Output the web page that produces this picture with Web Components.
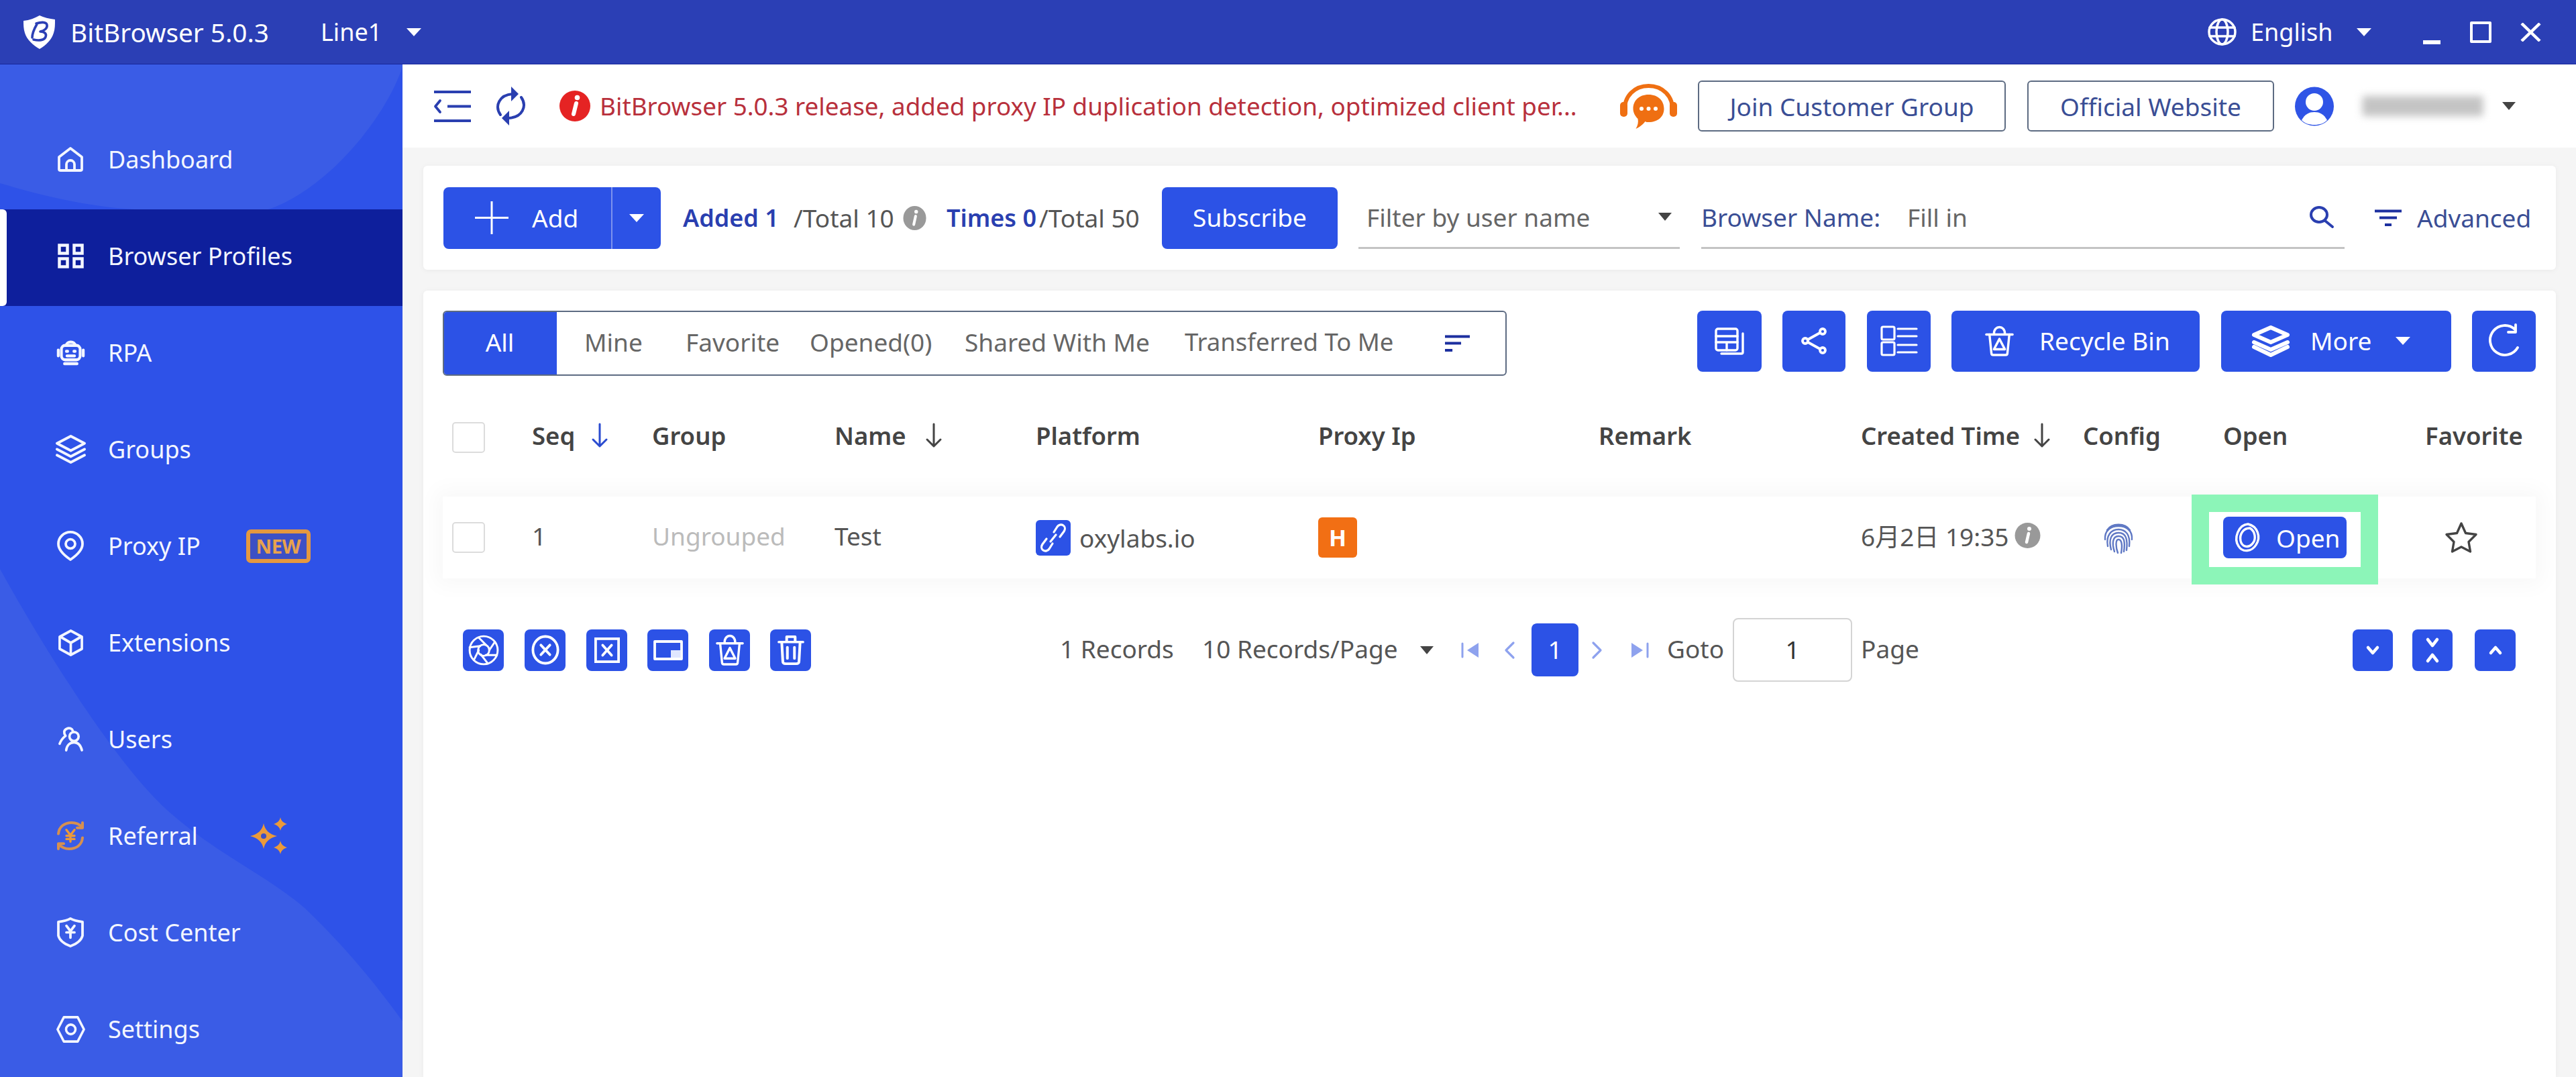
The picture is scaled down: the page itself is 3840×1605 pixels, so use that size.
<!DOCTYPE html>
<html lang="en">
<head>
<meta charset="utf-8">
<title>BitBrowser 5.0.3</title>
<style>
  html, body { margin: 0; width: 3840px; height: 1605px; overflow: hidden; background: #f5f5f5; }
  body { font-family: "Noto Sans", "Noto Sans CJK SC", sans-serif; font-size: 37px; color: #555; }
</style>
</head>
<body>
<bb-app>
  <bb-titlebar slot="title"></bb-titlebar>

  <bb-sidenav slot="nav">
    <bb-navitem icon="home" iw="38" ih="37">Dashboard</bb-navitem>
    <bb-navitem icon="grid" iw="39" ih="37" active>Browser Profiles</bb-navitem>
    <bb-navitem icon="robot" iw="41" ih="37">RPA</bb-navitem>
    <bb-navitem icon="layers" iw="45" ih="43">Groups</bb-navitem>
    <bb-navitem icon="pin" iw="40" ih="45">Proxy IP<bb-newtag slot="extra">NEW</bb-newtag></bb-navitem>
    <bb-navitem icon="cube" iw="37" ih="40">Extensions</bb-navitem>
    <bb-navitem icon="users" iw="39" ih="37">Users</bb-navitem>
    <bb-navitem icon="referral" iw="44" ih="45">Referral<bb-icon slot="extra" name="sparkle" w="56" h="55" style="margin-left:78px;color:#eb9a3a"></bb-icon></bb-navitem>
    <bb-navitem icon="cost" iw="40" ih="45">Cost Center</bb-navitem>
    <bb-navitem icon="hexgear" iw="43" ih="40">Settings</bb-navitem>
  </bb-sidenav>

  <bb-topstrip slot="main"></bb-topstrip>
  <bb-filterbar slot="main"></bb-filterbar>

  <bb-panel slot="main">
    <bb-toolbar>
      <bb-tabs>
        <bb-tab active style="width:170px">All</bb-tab>
        <bb-tab style="width:88px;margin-left:41px">Mine</bb-tab>
        <bb-tab style="width:137px;margin-left:63px">Favorite</bb-tab>
        <bb-tab style="width:182px;margin-left:48px">Opened(0)</bb-tab>
        <bb-tab style="width:279px;margin-left:49px">Shared With Me</bb-tab>
        <bb-tab style="width:310px;margin-left:49px;font-size:36.500px">Transferred To Me</bb-tab>
        <bb-icon name="sortlines" w="37" h="25" style="margin-left:78px;color:#1c2f9f"></bb-icon>
      </bb-tabs>
      <bb-btn slot="actions" style="width:96px;margin-left:284px"><bb-icon name="windows" w="44" h="40"></bb-icon></bb-btn>
      <bb-btn slot="actions" style="width:94px;margin-left:31px"><bb-icon name="share" w="38" h="40"></bb-icon></bb-btn>
      <bb-btn slot="actions" style="width:95px;margin-left:32px"><bb-icon name="listview" w="55" h="45"></bb-icon></bb-btn>
      <bb-btn slot="actions" style="width:370px;margin-left:31px;justify-content:flex-start;padding-left:50px"><bb-icon name="recycle" w="43" h="44" style="margin-right:38px"></bb-icon>Recycle Bin</bb-btn>
      <bb-btn slot="actions" style="width:343px;margin-left:32px;justify-content:flex-start;padding-left:45px"><bb-icon name="stack" w="58" h="48" style="margin-right:30px"></bb-icon>More<bb-caret style="margin-left:36px;color:#fff"></bb-caret></bb-btn>
      <bb-btn slot="actions" style="width:95px;margin-left:31px"><bb-icon name="reload" w="52" h="47"></bb-icon></bb-btn>
    </bb-toolbar>

    <bb-row head>
      <bb-cell><bb-check></bb-check></bb-cell>
      <bb-cell head>Seq<bb-icon name="arrowdown" w="26" h="36" style="margin-left:24px;color:#2a4bd0"></bb-icon></bb-cell>
      <bb-cell head>Group</bb-cell>
      <bb-cell head>Name<bb-icon name="arrowdown" w="26" h="36" style="margin-left:28px;color:#444"></bb-icon></bb-cell>
      <bb-cell head>Platform</bb-cell>
      <bb-cell head>Proxy Ip</bb-cell>
      <bb-cell head>Remark</bb-cell>
      <bb-cell head>Created Time<bb-icon name="arrowdown" w="26" h="36" style="margin-left:20px;color:#444"></bb-icon></bb-cell>
      <bb-cell head>Config</bb-cell>
      <bb-cell head>Open</bb-cell>
      <bb-cell head>Favorite</bb-cell>
    </bb-row>

    <bb-row>
      <bb-cell><bb-check></bb-check></bb-cell>
      <bb-cell>1</bb-cell>
      <bb-cell style="color:#bbb">Ungrouped</bb-cell>
      <bb-cell>Test</bb-cell>
      <bb-cell style="padding-bottom:0"><bb-platform></bb-platform>oxylabs.io</bb-cell>
      <bb-cell style="padding-bottom:0"><bb-hbadge>H</bb-hbadge></bb-cell>
      <bb-cell></bb-cell>
      <bb-cell>6月2日 19:35<bb-icon name="infogray" w="39" h="38" style="margin-left:8px"></bb-icon></bb-cell>
      <bb-cell style="padding-bottom:0"><bb-icon name="fingerprint" w="46" h="50" style="margin-left:30px;color:#5f78c4"></bb-icon></bb-cell>
      <bb-cell style="padding-bottom:0"><bb-openbtn>Open</bb-openbtn></bb-cell>
      <bb-cell style="padding-bottom:0"><bb-icon name="star" w="50" h="48" style="margin-left:29px;color:#444"></bb-icon></bb-cell>
      <bb-highlight></bb-highlight>
    </bb-row>

    <bb-pager></bb-pager>
  </bb-panel>
</bb-app>

<script>
// every icon: [viewBox, svg body]. stroke is currentColor unless the shape says otherwise
const ICONS = {
  logo: ['0 0 47 50', `<path fill="#fff" stroke="none" d="M24 0C30 3 38 5 47 6c0 8 0 14-2 20-3 10-11 18-21 24C14 44 5 36 2 26 0 20 0 14 0 8c9-1 17-4 24-8z"/>
    <path stroke="#2b3fb5" stroke-width="3.600" d="M20 13C16 20 13 27 13 33M19 12c6-2 15-3 16 2 1 5-4 9-10 10 6 0 10 3 8 8-2 5-10 6-18 4"/>`],
  home: ['0 0 38 37', `<g stroke-width="3.800"><path d="M19 2L36 15V33a2 2 0 0 1-2 2H4a2 2 0 0 1-2-2V15Z"/><path d="M13 35V26a6 6 0 0 1 12 0V35"/></g>`],
  grid: ['0 0 39 37', `<g stroke-width="4.500" stroke-linejoin="miter"><rect x="2.500" y="2.500" width="12" height="12"/><rect x="24.500" y="2.500" width="12" height="12"/><rect x="2.500" y="22.500" width="12" height="12"/><rect x="24.500" y="22.500" width="12" height="12"/></g>`],
  robot: ['0 0 44 38', `<g stroke-width="4.500"><rect x="7" y="8" width="30" height="22" rx="6"/><path d="M15 8c0-7 14-7 14 0M2 15v9M42 15v9M12 36h20"/><path d="M15 17h2M27 17h2M16 24h12"/></g>`],
  layers: ['0 0 46 44', `<g stroke-width="4"><path d="M23 2L44 13 23 24 2 13Z"/><path d="M2 22l21 11 21-11"/><path d="M2 31l21 11 21-11"/></g>`],
  stack: ['0 0 58 48', `<g stroke-width="6"><path d="M29 4L54 15 29 26 4 15Z"/><path d="M4 26l25 11 25-11"/><path d="M4 33l25 12 25-12"/></g>`],
  pin: ['0 0 40 46', `<g stroke-width="3.800"><path d="M20 44C10 37 2 29 2 20a18 18 0 0 1 36 0c0 9-8 17-18 24Z"/><circle cx="20" cy="20" r="7"/></g>`],
  cube: ['0 0 38 40', `<g stroke-width="3.800"><path d="M19 2L36 11V29L19 38 2 29V11Z"/><path d="M5 12l14 8 14-8M19 20v16"/></g>`],
  users: ['0 0 40 38', `<g stroke-width="3.800"><circle cx="25" cy="15" r="7"/><path d="M13 36c1-8 6-12 12-12s10 4 12 12"/><path d="M23 6c-1-3-5-5-9-3-5 2-5 7-2 11-4 3-7 7-9 12"/></g>`],
  referral: ['0 0 44 46', `<g stroke="#d6904f" stroke-width="4"><path d="M4 20C5 9 13 3 24 3c7 0 12 3 16 7M40 26c-1 11-9 17-20 17-7 0-12-3-16-7"/><path d="M40 3v8h-8M4 43v-8h8"/></g>
    <path stroke="#eb9a3a" stroke-width="3.400" d="M16 14l6 8 6-8M22 22v10M16 23h12M16 28h12"/>`],
  sparkle: ['0 0 56 55', `<g fill="currentColor" stroke="none"><path d="M20 9c2 10 8 16 20 19-12 3-18 9-20 19-2-10-8-16-20-19 12-3 18-9 20-19z"/><path d="M45 0c1 5 4 8 10 10-6 2-9 5-10 10-1-5-4-8-10-10 6-2 9-5 10-10z"/><path d="M45 35c1 5 4 8 10 10-6 2-9 5-10 10-1-5-4-8-10-10 6-2 9-5 10-10z"/></g><circle cx="20" cy="28" r="4" fill="#3d50c5" stroke="none"/>`],
  cost: ['0 0 40 46', `<path stroke-width="3.800" d="M20 2c5 3 11 4 18 5V28c-2 8-10 13-18 16C12 41 4 36 2 28V7c7-1 13-2 18-5Z"/><path stroke-width="3.800" d="M14 13l6 8 6-8M20 21v10M14 23h12"/>`],
  hexgear: ['0 0 46 42', `<path stroke-width="3.800" d="M12 2H34L44 21 34 40H12L2 21Z"/><circle stroke-width="3.800" cx="23" cy="21" r="7.500"/>`],
  collapse: ['0 0 55 47', `<path stroke-width="3.800" stroke-linecap="butt" d="M0 2H55M20 23.500H55M0 45H55"/><path stroke-width="3.800" d="M9 15L2 23.500 9 32"/>`],
  sync: ['0 0 45 58', `<g stroke-width="4"><path d="M8 42C-1 29 6 12 27 11"/><path d="M39 16c9 13 2 30-19 31"/></g><g fill="currentColor" stroke="none"><path d="M24 0l11 11-11 11z"/><path d="M21 36L10 47l11 11z"/></g>`],
  inforound: ['0 0 46 48', `<circle cx="23" cy="24" r="23" fill="#e52323" stroke="none"/><path stroke="#fff" stroke-width="6" d="M25 20l-4 16"/><circle cx="26.500" cy="11.500" r="3.800" fill="#fff" stroke="none"/>`],
  infogray: ['0 0 39 38', `<circle cx="19.500" cy="19" r="19" fill="#999" stroke="none"/><path stroke="#fff" stroke-width="4.500" d="M21 16l-3 13"/><circle cx="22" cy="9" r="3" fill="#fff" stroke="none"/>`],
  headset: ['0 0 87 67', `<path stroke="#ef6f12" stroke-width="6" d="M8 42C6 17 24 3 43.500 3S81 17 79 42"/>
    <g fill="#ef6f12" stroke="none"><rect x="1" y="27" width="11" height="22" rx="5"/><rect x="75" y="27" width="11" height="22" rx="5"/><path d="M43.500 16c14 0 23 9 23 21s-9 20-23 20c-2 0-4 0-5-1-3 4-9 9-14 11 3-5 4-10 3-15-4-4-7-9-7-15 0-12 9-21 23-21z"/></g>
    <g fill="#fff" stroke="none"><circle cx="33" cy="37" r="3"/><circle cx="43.500" cy="37" r="3"/><circle cx="54" cy="37" r="3"/></g>`],
  avatar: ['0 0 58 59', `<circle cx="29" cy="29.500" r="29" fill="#2f54e6" stroke="none"/><circle cx="29" cy="23" r="13" fill="#fff" stroke="none"/><path fill="#fff" stroke="none" d="M10 50c5-9 11-12 19-12s14 3 19 12c-5 5-11 7-19 7s-14-2-19-7z"/>`],
  globe: ['0 0 43 41', `<g stroke-width="3.500"><ellipse cx="21.500" cy="20.500" rx="19.500" ry="18.500"/><ellipse cx="21.500" cy="20.500" rx="8.500" ry="18.500"/><path d="M3 14H40M3 27H40"/></g>`],
  search: ['0 0 38 33', `<g stroke-width="4"><ellipse cx="15" cy="13" rx="12" ry="11"/><path d="M24 22l11 9"/></g>`],
  sortlines: ['0 0 40 25', `<path stroke-width="4" stroke-linecap="butt" d="M0 2.500H40M0 12.500H26M0 23H12"/>`],
  funnel: ['0 0 40 25', `<path stroke-width="4" stroke-linecap="butt" d="M0 2.500H40M7 12.500H33M15 23H25"/>`],
  plus: ['0 0 50 49', `<path stroke-width="3" stroke-linecap="butt" d="M25 0V49M0 24.500H50"/>`],
  windows: ['0 0 44 40', `<g stroke-width="3.400" stroke-linejoin="round"><rect x="2" y="2" width="32" height="32" rx="3"/><path d="M2 13H34M2 22H34M18 22V34"/><path d="M10 39H40a2 2 0 0 0 2-2V9"/></g>`],
  share: ['0 0 38 40', `<g stroke-width="3.800"><circle cx="32" cy="6" r="4"/><circle cx="6" cy="20" r="4"/><circle cx="32" cy="34" r="4"/><path d="M28 8L10 18M10 22l18 10"/></g>`],
  listview: ['0 0 55 45', `<g stroke-width="3.200"><rect x="2" y="2" width="19" height="19" rx="2"/><rect x="2" y="25" width="19" height="19" rx="2"/><path d="M26 5H54M26 16H54M26 29H54M26 40H54"/></g>`],
  recycle: ['0 0 45 46', `<g stroke-width="3.600"><path d="M2 13H43"/><path d="M14 12c0-14 17-14 17 0"/><path d="M7 13l3 29c0 2 1 3 3 3h19c2 0 3-1 3-3l3-29"/><path d="M22.500 20L31 36H14Z"/></g>`],
  reload: ['0 0 52 47', `<g stroke-width="3.800"><path d="M42 7A22 22 0 1 0 46 34"/><path d="M43 0V11H32"/></g>`],
  arrowdown: ['0 0 26 36', `<path stroke-width="3" d="M13 1V34M3 24l10 10 10-10"/>`],
  link: ['0 0 52 53', `<rect width="52" height="53" rx="6" fill="#2c52e6" stroke="none"/><g stroke="#fff" stroke-width="3.200"><path d="M22 32l8-10"/><path d="M27 18l5-8c2-3 6-4 9-2s3 6 1 9l-6 8"/><path d="M25 35l-5 8c-2 3-6 4-9 2s-3-6-1-9l6-8"/></g>`],
  fingerprint: ['0 0 46 50', `<g stroke-width="2.400"><path d="M6 14C13 3 33 3 40 14"/><path d="M3 28C2 14 12 8 23 8s21 6 20 20"/><path d="M7 38C4 22 12 13 23 13s18 8 16 25"/><path d="M12 43c-4-15 0-25 11-25s14 9 12 26"/><path d="M17 46c-4-12-3-23 6-23s10 9 8 23"/><path d="M22 48c-3-8-4-20 1-20s6 9 4 20"/></g>`],
  star: ['0 0 50 48', `<path stroke-width="3.400" d="M25 3l6.500 14.500L47 19.500 36 30.500 38.500 45 25 38 11.500 45 14 30.500 3 19.500l15.500-2Z"/>`],
  swirl: ['0 0 42 46', `<g stroke-width="3.400"><path d="M22 3C36 6 42 22 34 34 28 44 14 46 8 36 0 24 8 4 22 3Z"/><path d="M25 9C33 14 35 26 28 33 22 39 13 37 11 28 9 18 15 9 25 9Z"/></g>`],
  aperture: ['0 0 44 44', `<g stroke-width="2.800"><circle cx="22" cy="22" r="20"/><circle cx="22" cy="22" r="8"/><path d="M15 4l11 11M38 10L30 22M41 29H25M28 41L18 28M8 36l7-14M2 18l15-2"/></g>`],
  circlex: ['0 0 44 44', `<g stroke-width="4"><circle cx="22" cy="22" r="19.500"/><path d="M15 15l14 14M29 15L15 29"/></g>`],
  squarex: ['0 0 40 40', `<g stroke-width="4" stroke-linejoin="miter"><rect x="2" y="2" width="36" height="36"/><path d="M13 12l14 16M27 12L13 28"/></g>`],
  pip: ['0 0 44 30', `<rect x="2" y="2" width="40" height="26" stroke-width="3.800"/><rect x="26" y="15" width="14" height="11" fill="#dfe6ff" stroke="none"/>`],
  trash: ['0 0 38 46', `<g stroke-width="3.800"><path d="M2 11H36M13 10V3H25V10"/><path d="M6 11l1.500 29c0 3 1 4 4 4h15c3 0 4-1 4-4L32 11"/><path d="M14 19V36M24 19V36"/></g>`],
  first: ['0 0 26 22', `<path stroke-width="3" d="M2 1V21"/><path fill="currentColor" stroke="none" d="M26 0V22L9 11Z"/>`],
  last: ['0 0 26 22', `<path stroke-width="3" d="M24 1V21"/><path fill="currentColor" stroke="none" d="M0 0V22L17 11Z"/>`],
  prev: ['0 0 17 26', `<path stroke-width="3.200" d="M14 2L3 13l11 11"/>`],
  next: ['0 0 17 26', `<path stroke-width="3.200" d="M3 2l11 11L3 24"/>`],
  chevdown: ['0 0 20 14', `<path stroke-width="4.500" d="M3 3l7 8 7-8"/>`],
  chevup: ['0 0 20 14', `<path stroke-width="4.500" d="M3 11l7-8 7 8"/>`],
  chevboth: ['0 0 20 38', `<path stroke-width="4.500" d="M3 3l7 9 7-9M3 35l7-9 7 9"/>`]
};

class BbIcon extends HTMLElement {
  constructor() {
    super();
    this.attachShadow({ mode: 'open' });
  }
  connectedCallback() {
    const [box, body] = ICONS[this.getAttribute('name')];
    const w = this.getAttribute('w') || 40;
    const h = this.getAttribute('h') || 40;
    this.shadowRoot.innerHTML = `
      <style>
        :host { display: block; flex: none; width: ${w}px; height: ${h}px; }
        svg { display: block; width: 100%; height: 100%; overflow: visible; }
      </style>
      <svg viewBox="${box}" preserveAspectRatio="none" fill="none" stroke="currentColor" stroke-linecap="round" stroke-linejoin="round">${body}</svg>`;
  }
}

class BbCaret extends HTMLElement {
  constructor() {
    super();
    this.attachShadow({ mode: 'open' }).innerHTML = `
      <style>
        :host { display: block; flex: none; width: 0; height: 0; color: #fff;
          border-left: 11px solid transparent; border-right: 11px solid transparent;
          border-top: 12px solid currentColor; }
      </style>`;
  }
}

class BbApp extends HTMLElement {
  constructor() {
    super();
    this.attachShadow({ mode: 'open' }).innerHTML = `
      <style>
        :host { display: grid; grid-template-columns: 600px 1fr; grid-template-rows: 96px 1fr; width: 3840px; height: 1605px; }
        .title { grid-column: 1 / 3; display: block; }
        main { display: flex; flex-direction: column; min-width: 0; }
      </style>
      <div class="title"><slot name="title"></slot></div>
      <slot name="nav"></slot>
      <main><slot name="main"></slot></main>`;
  }
}

class BbTitlebar extends HTMLElement {
  constructor() {
    super();
    this.attachShadow({ mode: 'open' }).innerHTML = `
      <style>
        :host { display: flex; align-items: center; height: 95px; background: #2b3fb5; border-bottom: 1px solid #16249a; color: #fff; padding-left: 35px; font-size: 38.700px; }
        span { white-space: nowrap; flex: none; }
      </style>
      <bb-icon name="logo" w="47" h="50"></bb-icon>
      <span style="margin-left:23px;width:297px">BitBrowser 5.0.3</span>
      <span style="margin-left:76px;width:88px;font-size:36px">Line1</span>
      <bb-caret style="margin-left:40px"></bb-caret>
      <bb-icon name="globe" w="43" h="41" style="margin-left:2663px;color:#fff"></bb-icon>
      <span style="margin-left:21px;width:119px;font-size:36px">English</span>
      <bb-caret style="margin-left:39px"></bb-caret>
      <div style="margin-left:77px;width:26px;height:6px;background:#fff;align-self:flex-start;margin-top:60px"></div>
      <div style="margin-left:44px;width:32px;height:32px;box-sizing:border-box;border:4px solid #fff;border-radius:2px"></div>
      <svg style="margin-left:43px;flex:none" width="31" height="28" viewBox="0 0 31 28"><path d="M2 1L29 27M29 1L2 27" stroke="#fff" stroke-width="4.500" fill="none"/></svg>`;
  }
}

class BbSidenav extends HTMLElement {
  constructor() {
    super();
    this.attachShadow({ mode: 'open' }).innerHTML = `
      <style>
        :host { display: block; position: relative; background: #2e52e8; overflow: hidden; }
        svg { position: absolute; inset: 0; width: 600px; height: 1509px; }
        nav { position: relative; padding-top: 72px; }
      </style>
      <svg viewBox="0 0 600 1509"><g fill="#3a5ce6">
        <path d="M0 0H600V4C570 90 480 190 400 216H200C130 212 60 195 0 177Z"/>
        <path d="M0 752C60 860 170 1040 250 1112C320 1175 400 1210 454 1257C510 1310 560 1370 600 1426V1509H0Z"/>
      </g></svg>
      <nav><slot></slot></nav>`;
  }
}

class BbNavitem extends HTMLElement {
  constructor() {
    super();
    this.attachShadow({ mode: 'open' });
  }
  connectedCallback() {
    const name = this.getAttribute('icon');
    const iw = this.getAttribute('iw');
    const ih = this.getAttribute('ih');
    this.shadowRoot.innerHTML = `
      <style>
        :host { display: flex; align-items: center; box-sizing: border-box; height: 144px; padding-bottom: 5px; position: relative; color: #f3f6ff; white-space: nowrap; font-size: 36px; }
        :host([active]) { background: #0e1f9c; }
        :host([active])::before { content: ""; position: absolute; left: 0; top: 0; bottom: 0; width: 10px; background: #fff; border-radius: 0 6px 6px 0; }
        .ic { flex: none; width: 48px; height: 50px; margin: 0 32px 0 81px; display: flex; align-items: center; justify-content: center; }
      </style>
      <div class="ic"><bb-icon name="${name}" w="${iw}" h="${ih}"></bb-icon></div>
      <slot></slot><slot name="extra"></slot>`;
  }
}

class BbNewtag extends HTMLElement {
  constructor() {
    super();
    this.attachShadow({ mode: 'open' }).innerHTML = `
      <style>
        :host { display: flex; align-items: center; justify-content: center; box-sizing: border-box; width: 96px; height: 50px; margin-left: 68px;
          border: 6px solid #e5983f; border-radius: 7px; background: #3d50c5; color: #e9a24d; font-size: 29px; font-weight: 700; line-height: 1; letter-spacing: -.5px; }
      </style><slot></slot>`;
  }
}

class BbTopstrip extends HTMLElement {
  constructor() {
    super();
    this.attachShadow({ mode: 'open' }).innerHTML = `
      <style>
        :host { display: flex; align-items: center; flex: none; height: 124px; background: #fff; padding-left: 47px; color: #2a3fb0; }
        .notice { flex: none; width: 1454px; margin-left: 14px; color: #b8303c; white-space: nowrap; font-size: 36.800px; }
        .ghost { flex: none; height: 76px; box-sizing: border-box; border: 2px solid #5d6b82; border-radius: 6px; display: flex; align-items: center; justify-content: center; color: #3a4e95; white-space: nowrap; }
        .name { flex: none; width: 180px; height: 30px; margin: 0 -3px 0 43px; border-radius: 3px; filter: blur(6px);
          background: repeating-linear-gradient(90deg, #b9b9b9 0 5px, #d2d2d2 5px 9px); }
      </style>
      <bb-icon name="collapse" w="55" h="47"></bb-icon>
      <bb-icon name="sync" w="45" h="58" style="margin-left:36px"></bb-icon>
      <bb-icon name="inforound" w="46" h="48" style="margin-left:51px"></bb-icon>
      <div class="notice">BitBrowser 5.0.3 release, added proxy IP duplication detection, optimized client per...</div>
      <bb-icon name="headset" w="87" h="67" style="margin-left:66px"></bb-icon>
      <div class="ghost" style="width:459px;margin-left:30px">Join Customer Group</div>
      <div class="ghost" style="width:368px;margin-left:32px">Official Website</div>
      <bb-icon name="avatar" w="58" h="59" style="margin-left:31px"></bb-icon>
      <div class="name"></div>
      <bb-caret style="margin-left:31px;color:#444;border-left-width:10px;border-right-width:10px"></bb-caret>`;
  }
}

class BbBtn extends HTMLElement {
  constructor() {
    super();
    this.attachShadow({ mode: 'open' }).innerHTML = `
      <style>
        :host { display: flex; flex: none; align-items: center; justify-content: center; box-sizing: border-box; height: 91px; padding-bottom: 2px; background: #2c52e6; border-radius: 8px; color: #fff; white-space: nowrap; }
      </style><slot></slot>`;
  }
}

class BbFilterbar extends HTMLElement {
  constructor() {
    super();
    this.attachShadow({ mode: 'open' }).innerHTML = `
      <style>
        :host { display: flex; align-items: center; flex: none; height: 155px; margin: 27px 30px 0 31px; padding-left: 30px; background: #fff; border-radius: 6px; box-shadow: 0 1px 8px rgba(0,0,0,.05); white-space: nowrap; }
        .add { flex: none; display: flex; align-items: center; width: 324px; height: 92px; background: #2c52e6; border-radius: 8px; color: #fff; }
        .add .main { display: flex; align-items: center; width: 252px; height: 100%; padding-left: 47px; box-sizing: border-box; border-right: 2px solid #7d93ee; }
        .add .more { flex: 1; display: flex; justify-content: center; }
        .blue { color: #2a3fb0; font-weight: 600; font-size: 36px; }
        .t { flex: none; }
        .under { flex: none; display: flex; align-items: center; height: 92px; box-sizing: border-box; border-bottom: 3px solid #c4c4c4; }
        .ph { color: #666; }
      </style>
      <div class="add">
        <div class="main"><bb-icon name="plus" w="50" h="49"></bb-icon><span style="margin-left:35px">Add</span></div>
        <div class="more"><bb-caret></bb-caret></div>
      </div>
      <span class="t blue" style="margin-left:33px;width:149px">Added 1</span>
      <span class="t" style="margin-left:16px;width:149px">/Total 10</span>
      <bb-icon name="infogray" w="35" h="36" style="margin-left:14px"></bb-icon>
      <span class="t blue" style="margin-left:30px;width:138px">Times 0</span>
      <span class="t" style="width:152px">/Total 50</span>
      <bb-btn style="width:262px;height:92px;margin-left:31px">Subscribe</bb-btn>
      <div class="under ph" style="width:479px;margin-left:31px;padding-left:12px">
        <span style="width:435px">Filter by user name</span>
        <bb-caret style="color:#444;border-left-width:10px;border-right-width:10px"></bb-caret>
      </div>
      <div class="under" style="width:959px;margin-left:32px">
        <span style="color:#3a4e95;width:307px">Browser Name:</span>
        <span class="ph" style="width:599px">Fill in</span>
        <bb-icon name="search" w="38" h="33" style="color:#2a3fb0"></bb-icon>
      </div>
      <bb-icon name="funnel" w="40" h="25" style="margin-left:45px;color:#1c2f9f"></bb-icon>
      <span style="margin-left:23px;color:#3a4e95">Advanced</span>`;
  }
}

class BbPanel extends HTMLElement {
  constructor() {
    super();
    this.attachShadow({ mode: 'open' }).innerHTML = `
      <style>
        :host { display: block; flex: 1; margin: 31px 30px 0 31px; padding: 30px 30px 0 29px; background: #fff; border-radius: 6px 6px 0 0; box-shadow: 0 1px 8px rgba(0,0,0,.05); }
      </style><slot></slot>`;
  }
}

class BbToolbar extends HTMLElement {
  constructor() {
    super();
    this.attachShadow({ mode: 'open' }).innerHTML = `
      <style>
        :host { display: flex; align-items: flex-start; height: 97px; }
      </style><slot></slot><slot name="actions"></slot>`;
  }
}

class BbTabs extends HTMLElement {
  constructor() {
    super();
    this.attachShadow({ mode: 'open' }).innerHTML = `
      <style>
        :host { display: flex; flex: none; align-items: center; box-sizing: border-box; width: 1586px; height: 97px; border: 2px solid #5d6b82; border-radius: 6px; overflow: hidden; }
      </style><slot></slot>`;
  }
}

class BbTab extends HTMLElement {
  constructor() {
    super();
    this.attachShadow({ mode: 'open' }).innerHTML = `
      <style>
        :host { display: flex; flex: none; align-items: center; box-sizing: border-box; height: 100%; padding-bottom: 5px; white-space: nowrap; color: #666; }
        :host([active]) { justify-content: center; background: #2c52e6; color: #fff; margin-left: -2px; }
      </style><slot></slot>`;
  }
}

class BbRow extends HTMLElement {
  constructor() {
    super();
    this.attachShadow({ mode: 'open' }).innerHTML = `
      <style>
        :host { display: grid; grid-template-columns: 133px 179px 272px 300px 421px 418px 391px 331px 209px 301px 165px; align-items: center; position: relative; height: 122px; background: #fff; box-shadow: 0 0 30px 10px rgba(0,0,0,.03); }
        :host([head]) { height: 114px; margin: 35px 0 31px; box-shadow: none; }
      </style><slot></slot>`;
  }
}

class BbCell extends HTMLElement {
  constructor() {
    super();
    this.attachShadow({ mode: 'open' }).innerHTML = `
      <style>
        :host { display: flex; align-items: center; box-sizing: border-box; padding-bottom: 6px; white-space: nowrap; min-width: 0; }
        :host(:first-child) { padding: 0 0 0 14px; }
        :host([head]) { color: #444; font-weight: 600; font-size: 36.500px; padding-bottom: 7px; }
      </style><slot></slot>`;
  }
}

class BbCheck extends HTMLElement {
  constructor() {
    super();
    this.attachShadow({ mode: 'open' }).innerHTML = `
      <style>
        :host { display: block; box-sizing: border-box; width: 49px; height: 46px; border: 2px solid #dcdcdc; border-radius: 5px; background: #fff; }
      </style>`;
  }
}

class BbPlatform extends HTMLElement {
  constructor() {
    super();
    this.attachShadow({ mode: 'open' }).innerHTML = `
      <style>:host { display: block; flex: none; margin-right: 13px; }</style>
      <bb-icon name="link" w="52" h="53"></bb-icon>`;
  }
}

class BbHbadge extends HTMLElement {
  constructor() {
    super();
    this.attachShadow({ mode: 'open' }).innerHTML = `
      <style>
        :host { display: flex; align-items: center; justify-content: center; width: 58px; height: 60px; background: #f26f14; border-radius: 6px; color: #fff; font-weight: 700; font-size: 34px; line-height: 1; }
      </style><slot></slot>`;
  }
}

class BbOpenbtn extends HTMLElement {
  constructor() {
    super();
    this.attachShadow({ mode: 'open' }).innerHTML = `
      <style>
        :host { display: flex; align-items: center; box-sizing: border-box; width: 184px; height: 62px; padding-left: 15px; background: #2c52e6; border-radius: 8px; color: #fff; }
      </style>
      <bb-icon name="swirl" w="42" h="46" style="margin-right:22px"></bb-icon><slot></slot>`;
  }
}

// green annotation drawn over the Open cell
class BbHighlight extends HTMLElement {
  constructor() {
    super();
    this.attachShadow({ mode: 'open' }).innerHTML = `
      <style>
        :host { display: block; position: absolute; left: 2607px; top: -3px; width: 278px; height: 134px; box-sizing: border-box; border: 26px solid #8cf5b8; pointer-events: none; }
      </style>`;
  }
}

class BbPager extends HTMLElement {
  constructor() {
    super();
    this.attachShadow({ mode: 'open' }).innerHTML = `
      <style>
        :host { display: flex; align-items: center; height: 95px; margin-top: 59px; padding-left: 30px; white-space: nowrap; color: #555; }
        .sq { flex: none; display: flex; align-items: center; justify-content: center; width: 61px; height: 62px; margin-right: 31px; background: #2c52e6; border-radius: 8px; color: #fff; }
        .t { flex: none; padding-bottom: 4px; }
        .cur { flex: none; display: flex; align-items: center; justify-content: center; width: 70px; height: 79px; padding-bottom: 3px; box-sizing: border-box; background: #2c52e6; border-radius: 8px; color: #fff; }
        .goto { flex: none; display: flex; align-items: center; justify-content: center; box-sizing: border-box; width: 178px; height: 95px; padding-bottom: 3px; border: 2px solid #d4d4d4; border-radius: 8px; color: #333; }
      </style>
      <div class="sq"><bb-icon name="aperture" w="46" h="46"></bb-icon></div>
      <div class="sq"><bb-icon name="circlex" w="42" h="45"></bb-icon></div>
      <div class="sq" style="margin-right:30px"><bb-icon name="squarex" w="38" h="38"></bb-icon></div>
      <div class="sq"><bb-icon name="pip" w="44" h="30"></bb-icon></div>
      <div class="sq" style="margin-right:30px"><bb-icon name="recycle" w="42" h="45"></bb-icon></div>
      <div class="sq" style="margin-right:0"><bb-icon name="trash" w="40" h="45"></bb-icon></div>
      <span class="t" style="margin-left:371px;width:169px">1 Records</span>
      <span class="t" style="margin-left:43px;width:325px">10 Records/Page</span>
      <bb-caret style="color:#444;border-left-width:10px;border-right-width:10px"></bb-caret>
      <bb-icon name="first" w="26" h="22" style="margin-left:41px;color:#8ea2ee"></bb-icon>
      <bb-icon name="prev" w="17" h="26" style="margin-left:38px;color:#8ea2ee"></bb-icon>
      <div class="cur" style="margin-left:24px">1</div>
      <bb-icon name="next" w="17" h="26" style="margin-left:19px;color:#8ea2ee"></bb-icon>
      <bb-icon name="last" w="26" h="22" style="margin-left:43px;color:#8ea2ee"></bb-icon>
      <span class="t" style="margin-left:27px;width:87px">Goto</span>
      <div class="goto" style="margin-left:11px">1</div>
      <span class="t" style="margin-left:13px;width:85px">Page</span>
      <div class="sq" style="margin-left:648px;width:60px;margin-right:29px"><bb-icon name="chevdown" w="20" h="14"></bb-icon></div>
      <div class="sq" style="width:60px;margin-right:33px"><bb-icon name="chevboth" w="20" h="38"></bb-icon></div>
      <div class="sq" style="margin-right:0"><bb-icon name="chevup" w="20" h="14"></bb-icon></div>`;
  }
}

customElements.define('bb-icon', BbIcon);
customElements.define('bb-caret', BbCaret);
customElements.define('bb-app', BbApp);
customElements.define('bb-titlebar', BbTitlebar);
customElements.define('bb-sidenav', BbSidenav);
customElements.define('bb-navitem', BbNavitem);
customElements.define('bb-newtag', BbNewtag);
customElements.define('bb-topstrip', BbTopstrip);
customElements.define('bb-btn', BbBtn);
customElements.define('bb-filterbar', BbFilterbar);
customElements.define('bb-panel', BbPanel);
customElements.define('bb-toolbar', BbToolbar);
customElements.define('bb-tabs', BbTabs);
customElements.define('bb-tab', BbTab);
customElements.define('bb-row', BbRow);
customElements.define('bb-cell', BbCell);
customElements.define('bb-check', BbCheck);
customElements.define('bb-platform', BbPlatform);
customElements.define('bb-hbadge', BbHbadge);
customElements.define('bb-openbtn', BbOpenbtn);
customElements.define('bb-highlight', BbHighlight);
customElements.define('bb-pager', BbPager);
</script>
</body>
</html>
